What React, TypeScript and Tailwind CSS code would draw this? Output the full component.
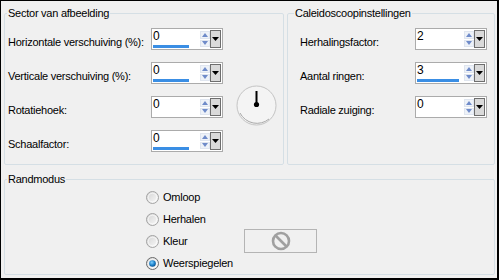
import React from 'react';

const font = { fontFamily: '"Liberation Sans", Arial, sans-serif' };

function SpinBox({ value, bar }: { value: string; bar?: number }) {
  return (
    <div className="w-[72px] h-[22px] border border-[#ababab] bg-white flex shrink-0">
      <div className="flex-1 flex flex-col pl-[1px]">
        <span className="text-[12px] leading-[15px] text-black">{value}</span>
        {bar ? (
          <div className="mt-auto mb-[1px] h-[3px] bg-[#3a8ee4]" style={{ width: bar }} />
        ) : null}
      </div>
      <div className="w-[10px] flex flex-col justify-center gap-[1px] py-[2px]">
        <div className="flex-1 bg-[#eef2f8] border border-[#dfe5ef] flex items-center justify-center">
          <svg width="6" height="4" viewBox="0 0 6 4"><path d="M3 0 L6 4 L0 4 Z" fill="#6f8bc9" /></svg>
        </div>
        <div className="flex-1 bg-[#eef2f8] border border-[#dfe5ef] flex items-center justify-center">
          <svg width="6" height="4" viewBox="0 0 6 4"><path d="M0 0 L6 0 L3 4 Z" fill="#6f8bc9" /></svg>
        </div>
      </div>
      <div className="w-[11px] my-[1px] mr-[1px] ml-[0px] bg-[#dadada] border border-[#6e6e6e] flex items-center justify-center">
        <svg width="7" height="4" viewBox="0 0 7 4"><path d="M0 0 L7 0 L3.5 4 Z" fill="#000" /></svg>
      </div>
    </div>
  );
}

function Row({ label, labelW, value, bar }: { label: string; labelW: string; value: string; bar?: number }) {
  return (
    <div className="flex h-[22px]">
      <span className={`${labelW} shrink-0 pt-[8px] leading-[13px] whitespace-nowrap`}>{label}</span>
      <SpinBox value={value} bar={bar} />
    </div>
  );
}

function Radio({ checked }: { checked?: boolean }) {
  return (
    <svg width="13" height="13" viewBox="0 0 13 13" className="shrink-0">
      <defs>
        <linearGradient id="rbg" x1="0" y1="0" x2="1" y2="1">
          <stop offset="0" stopColor="#d2d2d2" />
          <stop offset="1" stopColor="#fbfbfb" />
        </linearGradient>
        <radialGradient id="rdot" cx="0.4" cy="0.35" r="0.7">
          <stop offset="0" stopColor="#7fd0ff" />
          <stop offset="0.6" stopColor="#1a7fc8" />
          <stop offset="1" stopColor="#0b4f8a" />
        </radialGradient>
      </defs>
      <circle cx="6.5" cy="6.5" r="6" fill="url(#rbg)" stroke={checked ? '#6b6b6b' : '#a3a3a3'} strokeWidth="1" />
      <circle cx="6.5" cy="6.5" r="4.3" fill="none" stroke="#ffffff" strokeWidth="0.8" opacity="0.8" />
      {checked && <circle cx="6.5" cy="6.5" r="3.3" fill="url(#rdot)" />}
    </svg>
  );
}

function RadioRow({ label, checked, children }: { label: string; checked?: boolean; children?: React.ReactNode }) {
  return (
    <div className="flex items-center h-[22px]">
      <div className="w-[98px] flex items-center gap-[4px]">
        <Radio checked={checked} />
        <span className="leading-[13px]">{label}</span>
      </div>
      {children}
    </div>
  );
}

export default function App() {
  return (
    <div
      style={font}
      className="w-[499px] h-[280px] box-border bg-[#f0f0f0] border-l border-t border-r-2 border-b-2 border-black pl-[3px] pr-[2px] pt-[6px] text-[11px] tracking-[-0.25px] text-black"
    >
      <div className="flex gap-[3px]">
        {/* Sector van afbeelding */}
        <fieldset className="w-[280px] h-[158px] border border-[#d5dfe5] rounded-[2px]">
          <legend className="ml-[2px] px-[1px] h-[13px] leading-[13px]">Sector van afbeelding</legend>
          <div className="flex pl-[3px] pt-[8px]">
            <div className="flex flex-col gap-[12px]">
              <Row label="Horizontale verschuiving (%):" labelW="w-[143px]" value="0" bar={36} />
              <Row label="Verticale verschuiving (%):" labelW="w-[143px]" value="0" bar={36} />
              <Row label="Rotatiehoek:" labelW="w-[143px]" value="0" />
              <Row label="Schaalfactor:" labelW="w-[143px]" value="0" bar={36} />
            </div>
            <div className="ml-[13px] mt-[57px]">
              <svg width="41" height="41" viewBox="0 0 41 41">
                <circle cx="20.5" cy="20.5" r="19.5" fill="#f4f4f4" stroke="#c4c4c4" strokeWidth="1" />
                <path d="M4 28 A19 19 0 0 0 33 34" fill="none" stroke="#a8a8a8" strokeWidth="1" />
                <line x1="20.5" y1="6" x2="20.5" y2="19" stroke="#000" strokeWidth="2" />
                <circle cx="20.5" cy="19.5" r="2.6" fill="#000" />
              </svg>
            </div>
          </div>
        </fieldset>

        {/* Caleidoscoopinstellingen */}
        <fieldset className="w-[208px] h-[158px] border border-[#d5dfe5] rounded-[2px]">
          <legend className="ml-[6px] px-[1px] h-[13px] leading-[13px]">Caleidoscoopinstellingen</legend>
          <div className="flex flex-col gap-[12px] pl-[12px] pt-[8px]">
            <Row label="Herhalingsfactor:" labelW="w-[115px]" value="2" />
            <Row label="Aantal ringen:" labelW="w-[115px]" value="3" bar={42} />
            <Row label="Radiale zuiging:" labelW="w-[115px]" value="0" />
          </div>
        </fieldset>
      </div>

      {/* Randmodus */}
      <fieldset className="mt-[8px] h-[102px] border border-[#d5dfe5] rounded-[2px]">
        <legend className="ml-[2px] px-[1px] h-[13px] leading-[13px]">Randmodus</legend>
        <div className="pl-[141px] flex flex-col">
          <RadioRow label="Omloop" />
          <RadioRow label="Herhalen" />
          <RadioRow label="Kleur">
            <div className="w-[73px] h-[24px] border border-[#b4b4b4] bg-[#f0f0f0] flex items-center justify-center">
              <svg width="20" height="20" viewBox="0 0 20 20">
                <circle cx="10" cy="10" r="8" fill="none" stroke="#a0a0a0" strokeWidth="2.6" />
                <line x1="4.5" y1="4.5" x2="15.5" y2="15.5" stroke="#a0a0a0" strokeWidth="2.6" />
              </svg>
            </div>
          </RadioRow>
          <RadioRow label="Weerspiegelen" checked />
        </div>
      </fieldset>
    </div>
  );
}
